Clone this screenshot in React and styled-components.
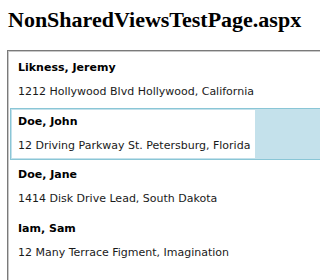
import styled, { createGlobalStyle } from 'styled-components';

const people = [
  { name: 'Likness, Jeremy', address: '1212 Hollywood Blvd Hollywood, California' },
  { name: 'Doe, John', address: '12 Driving Parkway St. Petersburg, Florida', selected: true },
  { name: 'Doe, Jane', address: '1414 Disk Drive Lead, South Dakota' },
  { name: 'Iam, Sam', address: '12 Many Terrace Figment, Imagination' },
];

function App() {
  return (
    <>
      <GlobalStyle />
      <Page>
        <Title>NonSharedViewsTestPage.aspx</Title>
        <ListBox>
          {people.map((person) => (
            <Item key={person.name} selected={person.selected}>
              <Card>
                <Name>{person.name}</Name>
                <Address>{person.address}</Address>
              </Card>
            </Item>
          ))}
        </ListBox>
      </Page>
    </>
  );
}

const GlobalStyle = createGlobalStyle`
  html, body {
    margin: 0;
    padding: 0;
    width: 320px;
    height: 280px;
    overflow: hidden;
    background: #fff;
  }
`;

const Page = styled.div`
  padding: 0 0 0 7px;
`;

const Title = styled.h2`
  margin: 0;
  padding: 6px 0 0 1px;
  height: 50px;
  box-sizing: border-box;
  font-family: 'Liberation Serif', 'Times New Roman', serif;
  font-weight: bold;
  font-size: 22px;
  line-height: 27px;
  color: #000;
  white-space: nowrap;
`;

const ListBox = styled.div`
  width: 400px;
  height: 300px;
  box-sizing: border-box;
  border: 1px solid #7a7a7a;
  box-shadow: inset 1px 1px 0 #c8c8c8;
  padding: 3px 0 0 2px;
  font-family: 'DejaVu Sans', Verdana, sans-serif;
  font-size: 11px;
  color: #000;
`;

const Item = styled.div`
  display: flex;
  padding: 1px;
  margin-bottom: 1.5px;
  border: 1px solid ${({ selected }) => (selected ? '#8ac6d6' : 'transparent')};
  background: ${({ selected }) => (selected ? '#c4e1eb' : 'transparent')};
`;

const Card = styled.div`
  background: #fff;
  padding: 0 5px 0 6px;
`;

const Name = styled.div`
  padding: 5px 0;
  line-height: 14px;
  font-weight: bold;
`;

const Address = styled.div`
  padding: 5px 0;
  line-height: 14px;
  color: #1a1a1a;
`;

export default App;
